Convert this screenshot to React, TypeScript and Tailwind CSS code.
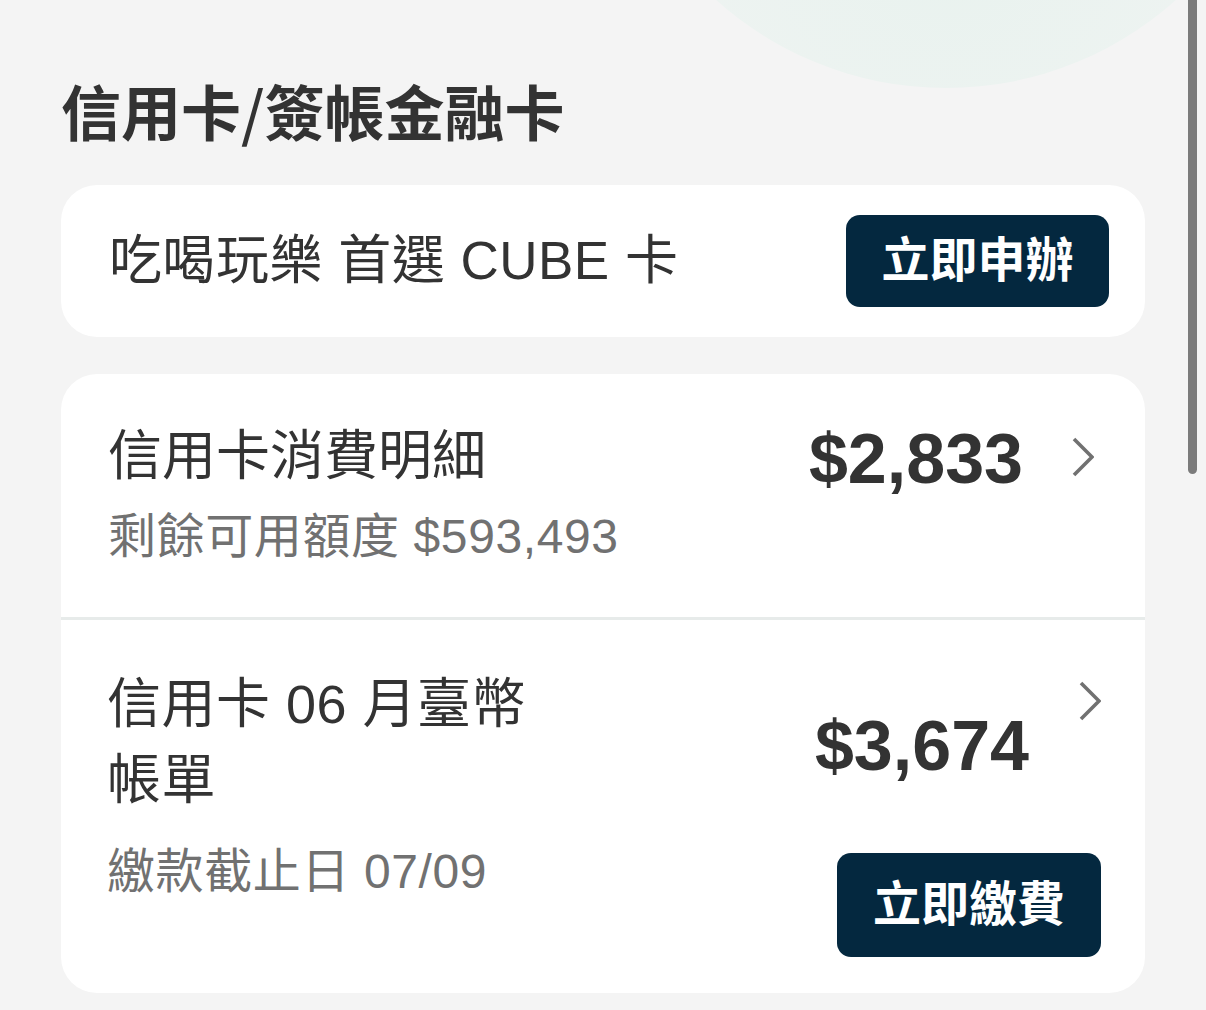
import React from "react";

const FONT = {
  fontFamily: '"Liberation Sans", "Noto Sans CJK TC", sans-serif',
};

const CJK_FIRST = {
  fontFamily: '"Noto Sans CJK TC", "Liberation Sans", sans-serif',
};

const Chevron = ({ className = "" }: { className?: string }) => (
  <svg
    width="22"
    height="40"
    viewBox="0 0 22 40"
    fill="none"
    className={className}
  >
    <polyline
      points="2,2 20,20 2,38"
      stroke="#717171"
      strokeWidth="3.6"
      strokeLinecap="butt"
      strokeLinejoin="miter"
    />
  </svg>
);

const App = () => {
  return (
    <div
      className="relative w-[1206px] h-[1010px] overflow-hidden bg-[#f4f4f4] text-[#333333]"
      style={FONT}
    >
      {/* decorative circle at top */}
      <div className="absolute left-[602px] top-[-600px] w-[688px] h-[688px] rounded-full bg-[radial-gradient(circle_at_50%_75%,#e8f2ee,#f1f4f3_70%)]" />

      {/* scrollbar */}
      <div className="absolute left-[1188px] top-0 w-[9px] h-[474px] rounded-b-full bg-[#7b7b7b]" />

      <div className="relative px-[61px] pt-[74px]">
        <h1
          className="text-[60px] leading-[72px] font-bold text-[#333333]"
          style={CJK_FIRST}
        >
          信用卡<span className="font-medium">/</span>簽帳金融卡
        </h1>

        {/* promo card */}
        <div className="mt-[39px] h-[152px] rounded-[36px] bg-white flex items-center justify-between pl-[48px] pr-[36px]">
          <span className="text-[53px] leading-[64px] tracking-[0.5px] text-[#333333]">
            吃喝玩樂 首選 CUBE 卡
          </span>
          <button className="w-[263px] h-[92px] rounded-[14px] bg-[#04283f] text-white text-[48px] font-bold leading-none">
            立即申辦
          </button>
        </div>

        {/* statement card */}
        <div className="mt-[37px] rounded-[36px] bg-white">
          {/* row 1 */}
          <div className="flex items-start justify-between pl-[47px] pr-[51px]">
            <div className="pt-[44px] pb-[46px]">
              <div className="text-[54px] leading-[76px]">信用卡消費明細</div>
              <div className="mt-[9px] text-[48px] leading-[68px] tracking-[0.6px] text-[#717171]">
                剩餘可用額度 $593,493
              </div>
            </div>
            <div className="flex items-start">
              <span className="mt-[50px] text-[70px] leading-[70px] font-bold">
                $2,833
              </span>
              <Chevron className="mt-[63px] ml-[49px]" />
            </div>
          </div>

          <div className="h-[3px] bg-[#e7ebea]" />

          {/* row 2 */}
          <div className="flex items-start justify-between pl-[46px] pr-[44px]">
            <div className="w-[440px] pt-[46px] pb-[87px]">
              <div className="text-[54px] leading-[76px] tracking-[0.5px]">
                信用卡 06 月臺幣帳單
              </div>
              <div className="mt-[20px] text-[48px] leading-[68px] tracking-[0.6px] text-[#717171]">
                繳款截止日 07/09
              </div>
            </div>
            <div className="flex flex-col items-end pb-[36px]">
              <div className="flex items-start">
                <span className="mt-[91px] text-[70px] leading-[70px] font-bold">
                  $3,674
                </span>
                <Chevron className="mt-[61px] ml-[50px]" />
              </div>
              <button className="mt-[72px] w-[264px] h-[104px] rounded-[14px] bg-[#04283f] text-white text-[48px] font-bold leading-none">
                立即繳費
              </button>
            </div>
          </div>
        </div>
      </div>
    </div>
  );
};

export default App;
